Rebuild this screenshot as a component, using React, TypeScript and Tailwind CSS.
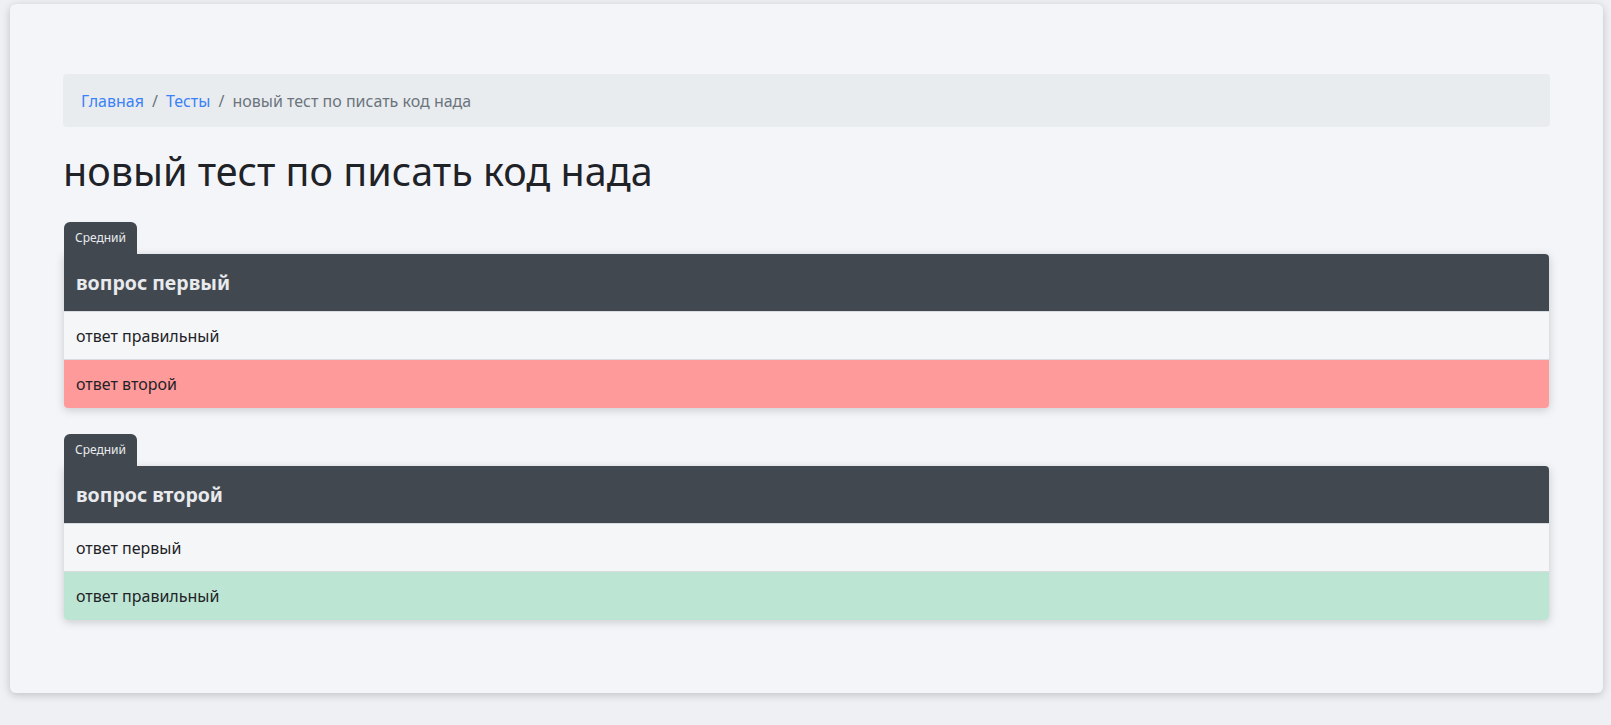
const questions = [
  {
    level: "Средний",
    title: "вопрос первый",
    answers: [
      { text: "ответ правильный", tone: "plain" },
      { text: "ответ второй", tone: "wrong" },
    ],
  },
  {
    level: "Средний",
    title: "вопрос второй",
    answers: [
      { text: "ответ первый", tone: "plain" },
      { text: "ответ правильный", tone: "right" },
    ],
  },
];

function AnswerRow({ text, tone }: { text: string; tone: string }) {
  const bg =
    tone === "wrong"
      ? "bg-[#ff9a9a]"
      : tone === "right"
        ? "bg-[#bce6d3]"
        : "bg-[#f5f6f8]";
  return (
    <div
      className={`h-[48px] flex items-center px-3 border-t border-[#d8dbe0] text-[16px] text-[#1f2328] last:h-[49px] last:rounded-b ${bg}`}
    >
      {text}
    </div>
  );
}

function QuestionCard({ q }: { q: (typeof questions)[number] }) {
  return (
    <div className="mx-px">
      <div className="inline-flex h-[32px] items-center px-[11px] rounded-t-md bg-[#41484f] text-[12px] text-[#e9ecef]">
        {q.level}
      </div>
      <div className="rounded-b rounded-tr shadow-[0_2px_10px_rgba(0,0,0,0.18)]">
        <div className="h-[57px] flex items-center px-3 bg-[#41484f] rounded-tr text-[19.5px] font-bold text-[#e8eaed]">
          {q.title}
        </div>
        {q.answers.map((a) => (
          <AnswerRow key={a.text} text={a.text} tone={a.tone} />
        ))}
      </div>
    </div>
  );
}

export default function App() {
  return (
    <div
      className="min-h-[725px] bg-[#eff0f4] pt-[4px] pl-[10px] pr-[8px] pb-[32px]"
      style={{ fontFamily: '"Noto Sans", "Open Sans", sans-serif' }}
    >
      <div className="h-[689px] rounded-md bg-[#f4f5f9] shadow-[0_2px_8px_rgba(0,0,0,0.2)] px-[53px] pt-[70px]">
        {/* Breadcrumb */}
        <nav className="h-[53px] flex items-center px-[18px] rounded bg-[#e9ecef] text-[16px]">
          <a href="#" className="text-[#3b82f6]">
            Главная
          </a>
          <span className="px-2 text-[#6c757d]">/</span>
          <a href="#" className="text-[#3b82f6]">
            Тесты
          </a>
          <span className="px-2 text-[#6c757d]">/</span>
          <span className="text-[#6c757d]">новый тест по писать код нада</span>
        </nav>

        <h1 className="mt-[21px] mb-[27px] text-[39.5px] leading-[1.2] text-[#1f2328]">
          новый тест по писать код нада
        </h1>

        <div className="flex flex-col gap-[26px]">
          {questions.map((q) => (
            <QuestionCard key={q.title} q={q} />
          ))}
        </div>
      </div>
    </div>
  );
}
